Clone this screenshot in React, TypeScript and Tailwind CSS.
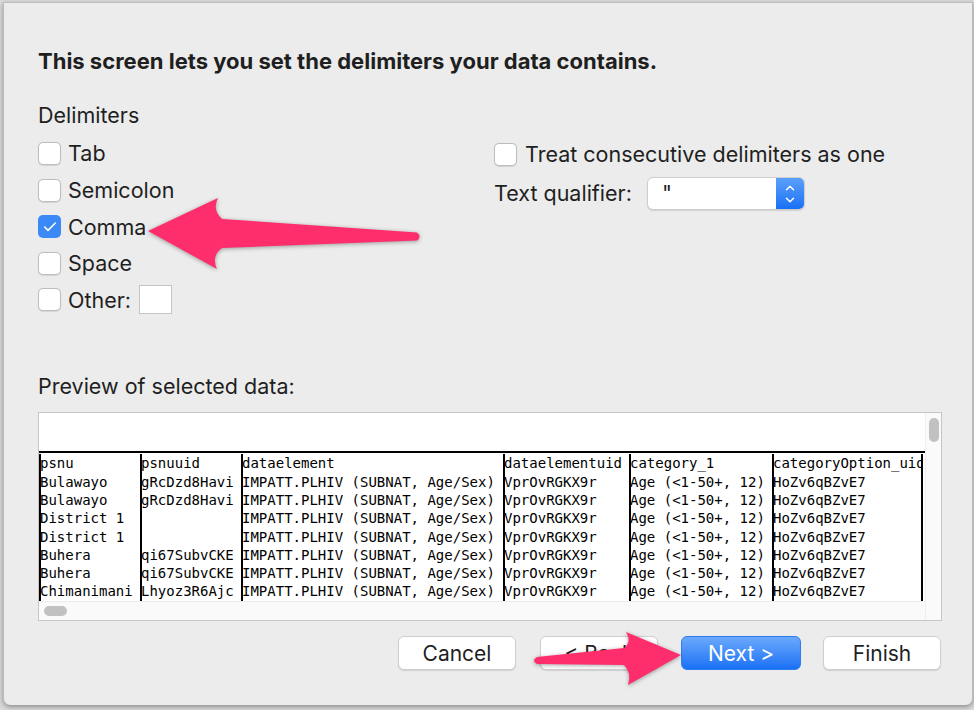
import { Check, ChevronDown, ChevronUp } from "lucide-react";

const ui = { fontFamily: "Inter, 'Liberation Sans', sans-serif" };
const mono = { fontFamily: "'DejaVu Sans Mono', 'Liberation Mono', monospace" };

const columns = [
  { w: "w-[101px]", key: "psnu" },
  { w: "w-[101px]", key: "psnuuid" },
  { w: "w-[262px]", key: "dataelement" },
  { w: "w-[126px]", key: "dataelementuid" },
  { w: "w-[143px]", key: "category_1" },
  { w: "w-[151px]", key: "categoryOption_uid" },
];

const rows: string[][] = [
  ["psnu", "psnuuid", "dataelement", "dataelementuid", "category_1", "categoryOption_uid"],
  ["Bulawayo", "gRcDzd8Havi", "IMPATT.PLHIV (SUBNAT, Age/Sex)", "VprOvRGKX9r", "Age (<1-50+, 12)", "HoZv6qBZvE7"],
  ["Bulawayo", "gRcDzd8Havi", "IMPATT.PLHIV (SUBNAT, Age/Sex)", "VprOvRGKX9r", "Age (<1-50+, 12)", "HoZv6qBZvE7"],
  ["District 1", "", "IMPATT.PLHIV (SUBNAT, Age/Sex)", "VprOvRGKX9r", "Age (<1-50+, 12)", "HoZv6qBZvE7"],
  ["District 1", "", "IMPATT.PLHIV (SUBNAT, Age/Sex)", "VprOvRGKX9r", "Age (<1-50+, 12)", "HoZv6qBZvE7"],
  ["Buhera", "qi67SubvCKE", "IMPATT.PLHIV (SUBNAT, Age/Sex)", "VprOvRGKX9r", "Age (<1-50+, 12)", "HoZv6qBZvE7"],
  ["Buhera", "qi67SubvCKE", "IMPATT.PLHIV (SUBNAT, Age/Sex)", "VprOvRGKX9r", "Age (<1-50+, 12)", "HoZv6qBZvE7"],
  ["Chimanimani", "Lhyoz3R6Ajc", "IMPATT.PLHIV (SUBNAT, Age/Sex)", "VprOvRGKX9r", "Age (<1-50+, 12)", "HoZv6qBZvE7"],
];

const Box = ({ checked }: { checked?: boolean }) =>
  checked ? (
    <div className="w-[23px] h-[23px] rounded-[5px] bg-[#3b88f7] flex items-center justify-center shrink-0">
      <Check size={16} strokeWidth={2.3} color="#fff" />
    </div>
  ) : (
    <div className="w-[23px] h-[23px] rounded-[5px] bg-white border border-[#bdbdbd] shadow-[0_0.5px_1px_rgba(0,0,0,0.1)] shrink-0" />
  );

const Btn = ({ label, primary, w }: { label: string; primary?: boolean; w: string }) => (
  <button
    className={
      primary
        ? `${w} h-[34px] rounded-[6px] text-white text-[21px] bg-gradient-to-b from-[#6aa8fb] to-[#1770f5] border border-[#2d7cf0]`
        : `${w} h-[34px] rounded-[6px] text-[#1f1f1f] text-[21px] bg-white border border-[#cfcfcf] shadow-[0_1px_1px_rgba(0,0,0,0.12)]`
    }
  >
    {label}
  </button>
);

export default function App() {
  return (
    <div className="relative w-[974px] h-[710px] overflow-hidden bg-[#dadada] pl-[3px] pt-[2px]" style={ui}>
      <div className="w-[970px] h-[703px] bg-[#ececec] border-t border-l border-r border-[#bcbcbc] rounded-b-[7px] shadow-[0_2px_5px_rgba(0,0,0,0.35)] pl-[34px] pt-[46px] text-[#1f1f1f]">
        <h1 className="text-[22px] font-bold leading-[24px]">
          This screen lets you set the delimiters your data contains.
        </h1>

        <div className="mt-[30px] text-[21.5px] leading-[24px]">Delimiters</div>

        <div className="flex mt-[15px] text-[21.5px]">
          {/* left column */}
          <div className="w-[456px] flex flex-col gap-[13.6px]">
            {["Tab", "Semicolon", "Comma", "Space"].map((l) => (
              <div key={l} className="flex items-center h-[23px] gap-[7px]">
                <Box checked={l === "Comma"} />
                <span>{l}</span>
              </div>
            ))}
            <div className="flex items-center h-[23px] gap-[7px]">
              <Box />
              <span>Other:</span>
              <div className="w-[33px] h-[29px] bg-white border border-[#c4c4c4] ml-[1px]" />
            </div>
          </div>

          {/* right column */}
          <div className="flex flex-col">
            <div className="flex items-center h-[23px] gap-[8px] mt-[1px]">
              <Box />
              <span>Treat consecutive delimiters as one</span>
            </div>
            <div className="flex items-center mt-[11px]">
              <span className="w-[153px]">Text qualifier:</span>
              <div className="flex w-[158px] h-[33px] rounded-[6px] bg-white border border-[#cdcdcd] shadow-[0_1px_1px_rgba(0,0,0,0.12)] overflow-hidden">
                <div className="flex-1 pl-[14px] leading-[31px]">"</div>
                <div className="w-[28px] bg-gradient-to-b from-[#5a9ffa] to-[#1770f5] flex flex-col items-center justify-center">
                  <ChevronUp size={14} strokeWidth={2.5} color="#fff" className="-mb-[1px]" />
                  <ChevronDown size={14} strokeWidth={2.5} color="#fff" className="-mt-[1px]" />
                </div>
              </div>
            </div>
          </div>
        </div>

        <div className="mt-[63px] text-[21.5px] leading-[24px]">Preview of selected data:</div>

        <div className="mt-[14px] w-[904px] h-[209px] border border-[#c6c6c6] bg-white flex">
          <div className="w-[886px] flex flex-col">
            <div className="h-[38px]" />
            <div className="flex-1 overflow-hidden">
              <div className="flex border-t-2 border-black text-[14px] text-black leading-[18.3px] pt-[1px]" style={mono}>
                {columns.map((c, ci) => (
                  <div
                    key={c.key}
                    className={`${c.w} border-l-2 border-black overflow-hidden whitespace-pre ${ci === columns.length - 1 ? "border-r-2" : ""}`}
                  >
                    {rows.map((r, ri) => (
                      <div key={ri} className="h-[18.3px] -ml-[1px]">
                        {r[ci]}
                      </div>
                    ))}
                    <div className="h-[18.3px]" />
                  </div>
                ))}
              </div>
            </div>
            <div className="h-[19px] bg-[#fafafa] border-t border-[#ececec] flex items-center pl-[5px]">
              <div className="w-[23px] h-[10px] rounded-full bg-[#c1c1c1]" />
            </div>
          </div>
          <div className="flex-1 bg-[#fafafa] border-l border-[#efefef] flex justify-center pt-[5px]">
            <div className="w-[10px] h-[24px] rounded-full bg-[#c1c1c1]" />
          </div>
        </div>

        <div className="mt-[15px] flex w-[904px] justify-end pr-[1px]">
          <Btn label="Cancel" w="w-[118px]" />
          <div className="w-[24px]" />
          <Btn label="< Back" w="w-[118px]" />
          <div className="w-[23px]" />
          <Btn label="Next >" primary w="w-[120px]" />
          <div className="w-[22px]" />
          <Btn label="Finish" w="w-[118px]" />
        </div>
      </div>

      {/* annotation arrows */}
      <svg
        className="absolute top-0 left-0 pointer-events-none"
        width="974"
        height="710"
        viewBox="0 0 974 710"
        style={{ filter: "drop-shadow(0 1px 2px rgba(0,0,0,0.35))" }}
      >
        <path
          d="M148,231 L218,198 Q212,210 222,219 L417,232.5 Q422,236.5 417,240.5 L222,248 Q211,256 217,269 Z"
          fill="#fe2d6b"
        />
        <path
          d="M681,655 L626,632 Q632,642 624,648 L537,657 Q531,660.5 537,664 L624,665 Q632,673 628,685 Z"
          fill="#fe2d6b"
        />
      </svg>
    </div>
  );
}
